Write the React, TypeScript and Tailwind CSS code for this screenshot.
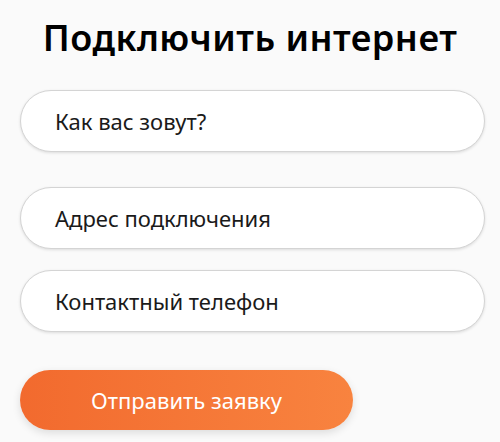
import React from "react";

export default function App() {
  return (
    <div className="w-[500px] h-[442px] bg-[#fafafa] overflow-hidden" style={{ fontFamily: '"Noto Sans", "Open Sans", sans-serif' }}>
      <div className="px-5 pt-[14px]">
        <h1 className="text-center text-[36px] leading-[48px] font-semibold text-black tracking-[0.5px]">
          Подключить интернет
        </h1>
        <div className="mt-[28px] flex flex-col">
          <div className="h-[62px] w-[465px] rounded-full bg-white border border-[#d4d4d4] shadow-[0_1px_3px_rgba(0,0,0,0.12)] flex items-center pl-[34px] text-[22px] text-[#1a1a1a]">
            Как вас зовут?
          </div>
          <div className="mt-[35px] h-[62px] w-[465px] rounded-full bg-white border border-[#d4d4d4] shadow-[0_1px_3px_rgba(0,0,0,0.12)] flex items-center pl-[34px] text-[22px] text-[#1a1a1a]">
            Адрес подключения
          </div>
          <div className="mt-[21px] h-[62px] w-[465px] rounded-full bg-white border border-[#d4d4d4] shadow-[0_1px_3px_rgba(0,0,0,0.12)] flex items-center pl-[34px] text-[22px] text-[#1a1a1a]">
            Контактный телефон
          </div>
          <button className="mt-[38px] h-[60px] w-[333px] rounded-full bg-gradient-to-r from-[#f26a2e] to-[#f8833f] shadow-[0_3px_8px_rgba(0,0,0,0.12)] text-white text-[22px] flex items-center justify-center">
            Отправить заявку
          </button>
        </div>
      </div>
    </div>
  );
}
